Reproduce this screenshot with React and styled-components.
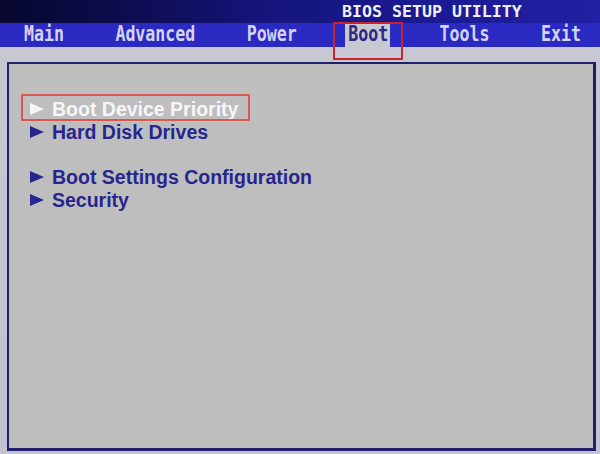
import React from "react";
import styled, { createGlobalStyle } from "styled-components";

const Global = createGlobalStyle`
  html, body { margin: 0; padding: 0; background: #c6c6d2; }
  body { width: 600px; height: 454px; overflow: hidden; }
`;

const Screen = styled.div`
  width: 600px;
  height: 454px;
  display: flex;
  flex-direction: column;
  background: linear-gradient(180deg, #cdcdd6 0px, #c8c8d2 20px, #c2c2d0 100%);
`;

const TitleBar = styled.div`
  height: 23px;
  flex: none;
  background: linear-gradient(90deg, #07072e 0%, #0c0c4e 20%, #15157c 45%, #1b1b96 75%, #2020a4 100%);
  display: flex;
  align-items: center;
  padding-left: 342px;
  box-sizing: border-box;
`;

const Title = styled.span`
  font-family: "DejaVu Sans Mono", "Liberation Mono", monospace;
  font-weight: bold;
  font-size: 16.6px;
  color: #f0f0f8;
  line-height: 1;
  margin-top: 2px;
`;

const MenuBar = styled.div`
  height: 24px;
  flex: none;
  background: #2a2ac2;
  display: flex;
  align-items: stretch;
  gap: 46.4px;
  padding-left: 21px;
`;

const Tab = styled.div`
  position: relative;
  flex: none;
  width: ${(p) => p.$chars * 10 + 5}px;
  box-sizing: border-box;
  display: flex;
  align-items: center;
  padding: 0 2px 0 3px;
  background: ${(p) => (p.$active ? "#c8c8d0" : "transparent")};
  color: ${(p) => (p.$active ? "#2a2a84" : "#d4d4f2")};
  font-family: "DejaVu Sans Mono", "Liberation Mono", monospace;
  font-weight: bold;
  font-size: 16.6px;

  ${(p) =>
    p.$active &&
    `
    &::after {
      content: "";
      position: absolute;
      left: -12px;
      right: -13px;
      top: -1px;
      bottom: -13px;
      border: 2px solid #cc2230;
      border-radius: 1px;
    }
  `}
`;

const TabText = styled.span`
  display: inline-block;
  transform: scaleY(1.25);
  line-height: 1;
  margin-top: 1px;
  white-space: nowrap;
`;

const Panel = styled.div`
  flex: 1;
  margin: 15px 4px 3px 7px;
  border: 2px solid #20206a;
  border-right-width: 3px;
  border-bottom-width: 3px;
  background: #bebebe;
  padding: 34px 0 0 12px;
  display: flex;
  flex-direction: column;
  align-items: flex-start;
`;

const Row = styled.div`
  position: relative;
  display: flex;
  align-items: center;
  gap: 9px;
  height: 22.8px;
  padding: 0 12px 0 9px;
  color: ${(p) => (p.$selected ? "#f6f6f6" : "#26268e")};
  font-family: "Liberation Sans", Arial, sans-serif;
  font-weight: bold;
  font-size: 19.5px;
  line-height: 22.8px;
  white-space: nowrap;

  ${(p) =>
    p.$selected &&
    `
    &::before {
      content: "";
      position: absolute;
      left: 0;
      right: 0;
      top: -4px;
      bottom: 0;
      border: 2px solid #d65a50;
      border-radius: 1px;
    }
  `}
`;

const Arrow = styled.span`
  width: 0;
  height: 0;
  border-left: 14px solid currentColor;
  border-top: 6.5px solid transparent;
  border-bottom: 6.5px solid transparent;
  margin-top: -1px;
  margin-right: -1px;
`;

const Spacer = styled.div`
  height: 22.8px;
`;

const tabs = ["Main", "Advanced", "Power", "Boot", "Tools", "Exit"];

export default function App() {
  return (
    <>
      <Global />
      <Screen>
        <TitleBar>
          <Title>BIOS SETUP UTILITY</Title>
        </TitleBar>
        <MenuBar>
          {tabs.map((t) => (
            <Tab key={t} $chars={t.length} $active={t === "Boot"}>
              <TabText>{t}</TabText>
            </Tab>
          ))}
        </MenuBar>
        <Panel>
          <Row $selected>
            <Arrow />
            Boot Device Priority
          </Row>
          <Row>
            <Arrow />
            Hard Disk Drives
          </Row>
          <Spacer />
          <Row>
            <Arrow />
            Boot Settings Configuration
          </Row>
          <Row>
            <Arrow />
            Security
          </Row>
        </Panel>
      </Screen>
    </>
  );
}
